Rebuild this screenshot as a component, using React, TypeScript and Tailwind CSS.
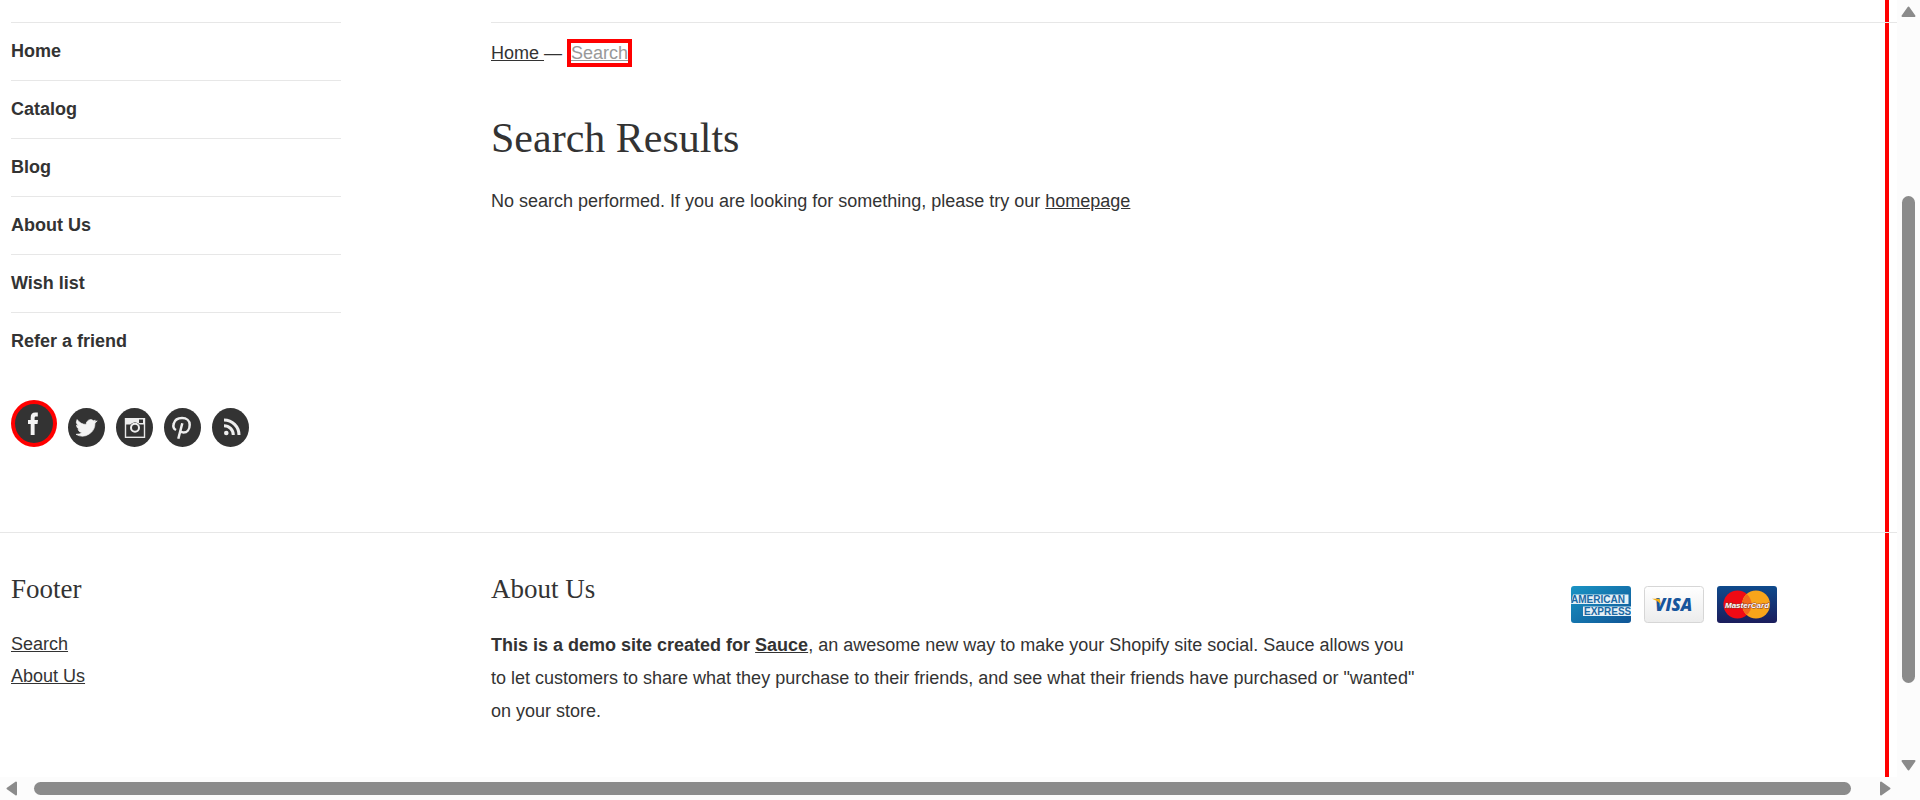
import type { ReactNode } from "react";

const navItems = ["Home", "Catalog", "Blog", "About Us", "Wish list", "Refer a friend"];
const serif = "font-['Liberation_Serif',serif] font-normal";

function Social({ label, children }: { label: string; children: ReactNode }) {
  return (
    <a href="#" aria-label={label} className="block h-[39px] w-[37px]">
      <svg viewBox="0 0 37 39" className="h-full w-full">
        <ellipse cx="18.5" cy="19.5" rx="18.5" ry="19.5" fill="#333" />
        {children}
      </svg>
    </a>
  );
}

function SocialLinks() {
  return (
    <div className="mt-[30px] flex items-end gap-[11px]">
      <a href="#" aria-label="Facebook" className="block h-[47px] w-[46px]">
        <svg viewBox="0 0 46 47" className="h-full w-full">
          <ellipse cx="23" cy="23.5" rx="23" ry="23.5" fill="#f00" />
          <ellipse cx="23" cy="23.5" rx="19" ry="19.5" fill="#333" />
          <path
            d="M19.7 35V24H17v-4h2.700v-2.500c0-3.300 1.500-5 4.600-5h2.500v4h-1.700c-1.200 0-1.500.5-1.500 1.600V20h3.400l-.5 4h-2.900v11z"
            fill="#f4f4f4"
          />
        </svg>
      </a>
      <Social label="Twitter">
        <path
          transform="translate(7.600 8.800) scale(.9)"
          d="M24 4.600a10 10 0 0 1-2.800.8 5 5 0 0 0 .6-1.700 10 10 0 0 1-2 .6 4.900 4.900 0 0 0-8 4.100C8 8.800 4 6.500 1.700 3.100a4.900 4.900 0 0 0 1.500 6.600 5 5 0 0 1-2.200-.6 4.900 4.900 0 0 0 3.900 4.800 5 5 0 0 1-2.200.1 4.900 4.900 0 0 0 4.600 3.400A10 10 0 0 1 .5 19.500 14 14 0 0 0 21.500 7z"
          fill="#f4f4f4"
          stroke="#f4f4f4"
          strokeWidth=".8"
        />
      </Social>
      <Social label="Instagram">
        <rect x="9.500" y="10.700" width="19" height="18.600" fill="none" stroke="#e8e8e8" strokeWidth="1.400" />
        <path d="M9 10h20v6.500h-5.500a6 6 0 0 0-9 0H9z" fill="#eee" />
        <rect x="23" y="11.500" width="4" height="3.500" fill="#333" />
        <circle cx="19" cy="19.800" r="5.300" fill="#333" />
        <circle cx="19" cy="19.800" r="4" fill="none" stroke="#eee" strokeWidth="2" />
      </Social>
      <Social label="Pinterest">
        <path
          d="M12 22c-2.600-1.300-3-4-2.200-6.500 1-3.500 4.300-5.500 8.200-5.500 4.700 0 7.700 2.700 7.700 6.700 0 4.800-2.700 7.800-6.200 7.800-1.600 0-2.700-.7-3.200-1.700M18.300 15.200l-4 15.600"
          fill="none"
          stroke="#eee"
          strokeWidth="2.500"
        />
      </Social>
      <Social label="RSS">
        <circle cx="14.300" cy="25" r="2.300" fill="#eee" />
        <path d="M12 17.700a9.300 9.300 0 0 1 9.300 9.300M12 12a15 15 0 0 1 15 15" fill="none" stroke="#eee" strokeWidth="3" />
      </Social>
    </div>
  );
}

function PaymentCards() {
  return (
    <ul className="flex gap-[13px] pt-[13px]">
      <li>
        <svg viewBox="0 0 60 37" className="h-[37px] w-[60px]" role="img" aria-label="American Express">
          <defs>
            <linearGradient id="amex" x1="0" y1="0" x2="1" y2="1">
              <stop offset="0" stopColor="#1a94c4" />
              <stop offset="1" stopColor="#0f5596" />
            </linearGradient>
          </defs>
          <rect width="60" height="37" rx="3" fill="url(#amex)" />
          <path d="M2 8.500h55.500v9.500H0zM12 20.500h48v9.500H12z" fill="#e4eff6" />
          <g fill="#1a68a3" fontFamily="Liberation Sans, sans-serif" fontWeight="bold" fontSize="10">
            <text x="0" y="17">AMERICAN</text>
            <text x="13" y="29">EXPRESS</text>
          </g>
        </svg>
      </li>
      <li>
        <svg viewBox="0 0 60 37" className="h-[37px] w-[60px]" role="img" aria-label="Visa">
          <defs>
            <linearGradient id="visa" x1="0" y1="0" x2="0" y2="1">
              <stop offset="0" stopColor="#fff" />
              <stop offset="1" stopColor="#ececec" />
            </linearGradient>
          </defs>
          <rect x=".5" y=".5" width="59" height="36" rx="3" fill="url(#visa)" stroke="#d6d6d6" />
          <text x="11" y="25" fill="#17559c" fontFamily="Open Sans, sans-serif" fontWeight="800" fontStyle="italic" fontSize="17">
            VISA
          </text>
          <path d="M8 12.700h6.500c1 0 1.300.5 1.500 1.300l1 5c-1.500-2.700-5-5-9-6.300z" fill="#f2ae14" />
        </svg>
      </li>
      <li>
        <svg viewBox="0 0 60 37" className="h-[37px] w-[60px]" role="img" aria-label="MasterCard">
          <defs>
            <linearGradient id="mc" x1="0" y1="0" x2="0" y2="1">
              <stop offset="0" stopColor="#0e4a8c" />
              <stop offset="1" stopColor="#1b1d5c" />
            </linearGradient>
          </defs>
          <rect width="60" height="37" rx="3" fill="url(#mc)" />
          <circle cx="20.500" cy="18.500" r="14" fill="#f00a14" />
          <circle cx="39" cy="18.500" r="14" fill="#f9a51a" />
          <path d="M29.800 8a14 14 0 0 0 0 21 14 14 0 0 0 0-21z" fill="#f26a1b" />
          <text
            x="8"
            y="21.500"
            fill="#fff"
            stroke="#8a3a2a"
            strokeWidth="1"
            paintOrder="stroke"
            fontFamily="Liberation Sans, sans-serif"
            fontWeight="bold"
            fontStyle="italic"
            fontSize="8"
          >
            MasterCard
          </text>
        </svg>
      </li>
    </ul>
  );
}

function Arrow({ d, label, wide }: { d: string; label: string; wide?: boolean }) {
  return (
    <button type="button" aria-label={label} className="block">
      <svg viewBox={wide ? "0 0 15 11" : "0 0 11 15"} className={wide ? "h-[11px] w-[15px]" : "h-[15px] w-[11px]"}>
        <path d={d} fill="#8b8b8b" stroke="#8b8b8b" strokeWidth="2" strokeLinejoin="round" />
      </svg>
    </button>
  );
}

export default function App() {
  return (
    <div className="flex min-h-screen flex-col bg-white font-['Liberation_Sans',sans-serif] text-lg text-[#333]">
      <div className="flex flex-1">
        <div className="relative min-w-0 flex-1">
          <div className="absolute inset-y-0 right-2 w-1 bg-[#f00]" />
          <div className="relative">
            <div className="grid grid-cols-[480px_minmax(0,1fr)] pt-[22px] pb-[85px] pl-[11px]">
              <aside className="pr-[150px]">
                <nav>
                  <ul>
                    {navItems.map((item) => (
                      <li key={item} className="border-t border-[#e7e7e7]">
                        <a href="#" className="block font-bold leading-[57px]">
                          {item}
                        </a>
                      </li>
                    ))}
                  </ul>
                </nav>
                <SocialLinks />
              </aside>
              <main className="border-t border-[#e7e7e7] pt-4">
                <div className="leading-7">
                  <a href="#" className="whitespace-pre underline">{"Home "}</a>—{" "}
                  <a href="#" className="border-4 border-[#f00] text-[#999] underline">Search</a>
                </div>
                <h1 className={`mt-[47px] text-[42px] leading-[48px] ${serif}`}>Search Results</h1>
                <p className="mt-[23px] leading-[33px]">
                  No search performed. If you are looking for something, please try our{" "}
                  <a href="#" className="underline">homepage</a>
                </p>
              </main>
            </div>
            <footer className="grid grid-cols-[480px_minmax(0,1fr)_326px] border-t border-[#e7e7e7] pt-10 pl-[11px]">
              <div>
                <h2 className={`text-[27px] leading-8 ${serif}`}>Footer</h2>
                <ul className="mt-[23px] leading-8">
                  <li><a href="#" className="underline">Search</a></li>
                  <li><a href="#" className="underline">About Us</a></li>
                </ul>
              </div>
              <div className="pr-38">
                <h2 className={`text-[27px] leading-8 ${serif}`}>About Us</h2>
                <p className="mt-6 leading-[33px]">
                  <strong>This is a demo site created for </strong>
                  <a href="#" className="font-bold underline">Sauce</a>, an awesome new way to make your Shopify site
                  social. Sauce allows you to let customers to share what they purchase to their friends, and see what
                  their friends have purchased or "wanted" on your store.
                </p>
              </div>
              <PaymentCards />
            </footer>
          </div>
        </div>
        <div className="flex w-[23px] flex-col items-center bg-[#fcfcfc] pt-1.5 pb-1.5">
          <Arrow wide label="Scroll up" d="M7.500 1.500L13.500 10H1.500z" />
          <div className="flex w-[13px] flex-1 flex-col pt-[179px] pb-[77px]">
            <div className="flex-1 rounded-full bg-[#8b8b8b]" />
          </div>
          <Arrow wide label="Scroll down" d="M7.500 9.500L13.500 1H1.500z" />
        </div>
      </div>
      <div className="flex h-[23px] items-center bg-[#fcfcfc] pr-[29px] pl-1.5">
        <Arrow label="Scroll left" d="M1.500 7.500L10 1.500V13.500z" />
        <div className="flex-1 pr-[29px] pl-[17px]">
          <div className="h-[13px] rounded-full bg-[#8b8b8b]" />
        </div>
        <Arrow label="Scroll right" d="M9.500 7.500L1 1.500V13.500z" />
      </div>
    </div>
  );
}
